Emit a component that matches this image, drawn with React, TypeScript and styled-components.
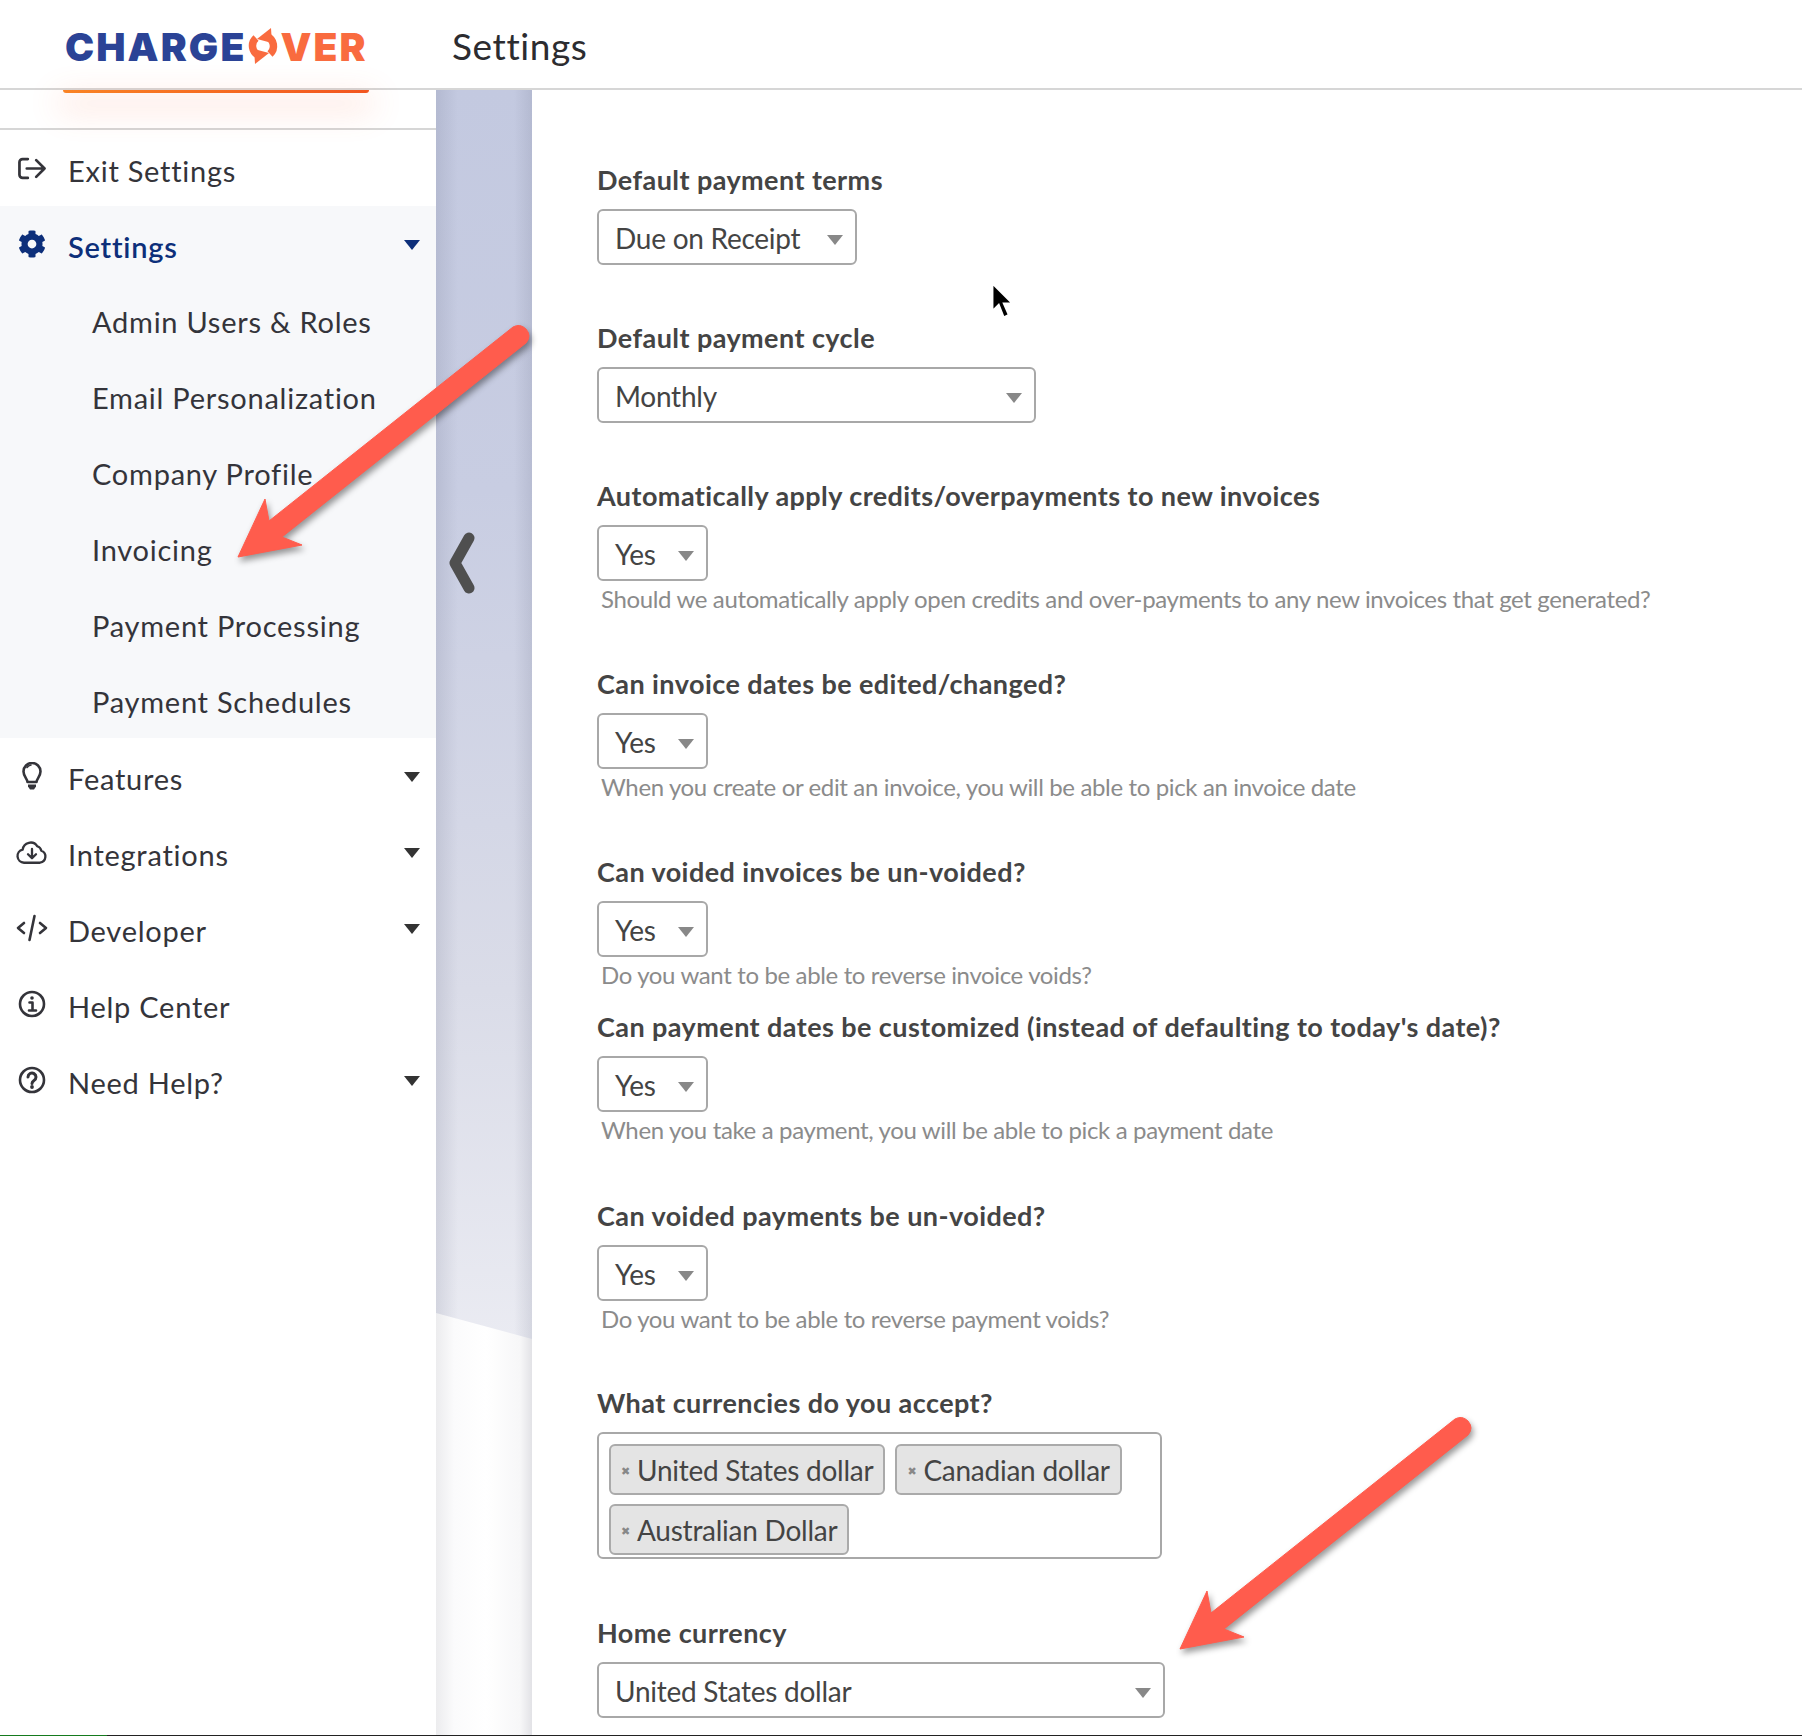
import styled, { createGlobalStyle } from 'styled-components'
import { FaCog } from 'react-icons/fa'

const UI_FONT = `Lato, "Open Sans", "Liberation Sans", sans-serif`

const GlobalStyle = createGlobalStyle`
  html, body {
    margin: 0;
    padding: 0;
    background: #fff;
  }
  * {
    box-sizing: border-box;
  }
`

const Page = styled.div`
  position: relative;
  width: 1802px;
  height: 1736px;
  display: flex;
  flex-direction: column;
  overflow: hidden;
  font-family: ${UI_FONT};
  color: #333;
`

const Header = styled.header`
  height: 90px;
  flex: none;
  display: flex;
  align-items: center;
  padding-top: 4px;
  border-bottom: 2px solid #d6d6d6;
  background: #fff;
`

const Logo = styled.div`
  width: 452px;
  padding-left: 65px;
  display: flex;
  align-items: center;
  font-family: Inter, sans-serif;
  font-weight: 900;
  font-size: 39px;
  line-height: 1;
`

const LogoBlue = styled.span`
  color: #2b4396;
  letter-spacing: 2.1px;
`

const LogoOrange = styled.span`
  color: #f96b3f;
  letter-spacing: 2.1px;
`

const PageTitle = styled.h1`
  margin: 0 0 2px;
  font-weight: 400;
  font-size: 37px;
  color: #2c2c30;
  letter-spacing: 0.6px;
`

const Main = styled.div`
  flex: 1;
  min-height: 0;
  display: flex;
`

const Sidebar = styled.nav`
  width: 436px;
  flex: none;
  background: #fff;
`

const SideTop = styled.div`
  height: 40px;
  border-bottom: 2px solid #d6d6d6;
`

const OrangeBar = styled.div`
  width: 306px;
  height: 3px;
  margin-left: 63px;
  border-radius: 0 0 4px 4px;
  background: linear-gradient(90deg, #f98324, #f2551f);
  box-shadow: 0 12px 32px 6px rgba(250, 110, 70, 0.2);
`

const MenuGroup = styled.div`
  background: #f7f8fa;
`

const Row = styled.div<{ $active?: boolean; $sub?: boolean }>`
  height: 76px;
  display: flex;
  align-items: center;
  padding: 0 16px ${({ $sub }) => ($sub ? '2px' : '0')} ${({ $sub }) => ($sub ? '92px' : '16px')};
  font-size: 29px;
  letter-spacing: 0.75px;
  color: ${({ $active }) => ($active ? '#0d2f7a' : '#34343a')};
  font-weight: ${({ $active }) => ($active ? 600 : 400)};
`

const RowIcon = styled.span`
  width: 32px;
  height: 34px;
  margin-right: 20px;
  flex: none;
  display: flex;
  align-items: center;
  justify-content: center;
`

const RowText = styled.span`
  flex: 1;
  padding-top: 4px;
`

const Caret = styled.span<{ $color?: string }>`
  width: 0;
  height: 0;
  flex: none;
  margin-top: 2px;
  border-left: 8.5px solid transparent;
  border-right: 8.5px solid transparent;
  border-top: 10px solid ${({ $color }) => $color ?? '#333'};
`

const SelectCaret = styled(Caret)`
  margin-top: 4px;
  border-left-width: 8px;
  border-right-width: 8px;
`

const Gutter = styled.div`
  position: relative;
  width: 96px;
  flex: none;
  padding: 442px 0 0 12px;
  background: linear-gradient(
    90deg,
    #ececee 0,
    #fbfbfc 18px,
    #ffffff 50px,
    #f7f7f8 84px,
    #e2e2e6 96px
  );

  &::before {
    content: '';
    position: absolute;
    inset: 0;
    clip-path: polygon(0 0, 100% 0, 100% 1249px, 0 1223px);
    background:
      linear-gradient(
        90deg,
        rgba(100, 105, 130, 0.16) 0,
        rgba(100, 105, 130, 0) 22px,
        rgba(100, 105, 130, 0) 78px,
        rgba(100, 105, 130, 0.16) 96px
      ),
      linear-gradient(180deg, #c3c9e0 0, #c8cde2 400px, #dadce8 900px, #eaebf2 1249px);
  }
`

const Chevron = styled.svg`
  position: relative;
  display: block;
`

const Card = styled.main`
  flex: 1;
  min-width: 0;
  padding: 73px 0 0 65px;
  background: #fff;
  border-top-left-radius: 8px;
`

const Group = styled.div<{ $after: number }>`
  margin-bottom: ${({ $after }) => $after}px;
`

const Label = styled.label`
  display: block;
  height: 34px;
  margin-bottom: 12px;
  font-size: 27px;
  line-height: 34px;
  font-weight: 700;
  color: #444;
  letter-spacing: 0.43px;
  white-space: nowrap;
`

const Select = styled.div<{ $width: number }>`
  width: ${({ $width }) => $width}px;
  height: 56px;
  display: flex;
  align-items: center;
  justify-content: space-between;
  padding: 2px 12px 0 16px;
  border: 2px solid #a8a8a8;
  border-radius: 6px;
  background: #fff;
  font-size: 28px;
  color: #444;
  letter-spacing: -0.25px;
`

const Help = styled.div`
  height: 30px;
  margin-top: 3px;
  padding-left: 4px;
  font-size: 24px;
  line-height: 30px;
  color: #8b8b8b;
  letter-spacing: -0.36px;
  white-space: nowrap;
`

const TagBox = styled.div`
  width: 565px;
  height: 127px;
  padding: 10px;
  display: flex;
  flex-wrap: wrap;
  align-content: flex-start;
  gap: 9px 10px;
  border: 2px solid #a8a8a8;
  border-radius: 6px;
`

const Tag = styled.span`
  height: 51px;
  display: flex;
  align-items: center;
  gap: 4px;
  padding: 1px 10px 0;
  background: #e4e4e4;
  border: 2px solid #aaa;
  border-radius: 6px;
  font-size: 28px;
  color: #444;
  letter-spacing: -0.25px;
`

const TagRemove = styled.span`
  width: 12px;
  margin-top: 3px;
  font-family: "DejaVu Sans", sans-serif;
  font-size: 11px;
  color: #888;
`

const BottomStrip = styled.div`
  height: 1px;
  flex: none;
  background: #222;
`

const BottomProgress = styled.div`
  width: 107px;
  height: 100%;
  background: #157a1e;
`

const Overlay = styled.svg<{ $left: number; $top: number }>`
  position: absolute;
  left: ${({ $left }) => $left}px;
  top: ${({ $top }) => $top}px;
  overflow: visible;
  z-index: 5;
`

const ArrowShape = styled.g`
  filter: drop-shadow(2px 4px 3px rgba(0, 0, 0, 0.4));
`

const IconStroke = styled.svg`
  fill: none;
  stroke: #34343a;
  stroke-width: 2.6;
  stroke-linecap: round;
  stroke-linejoin: round;
`

const MarkSvg = styled.svg`
  margin: 0 1px 0 1px;
`

function Arrow({ left, top }: { left: number; top: number }) {
  // tip is the origin of the drawing, the tail runs up and to the right
  return (
    <Overlay $left={left} $top={top} width="300" height="240" viewBox="0 -232 300 240">
      <ArrowShape>
        <path
          d="M0 0 L27 -58 L31 -36 L275 -230 Q282 -234 288 -228 Q294 -221 288 -214 L44 -20 L64 -12 Z"
          fill="#ff5c4d"
          stroke="#ff5c4d"
          strokeLinejoin="round"
          strokeWidth="1"
        />
      </ArrowShape>
    </Overlay>
  )
}

function LogoMark() {
  const half = (
    <>
      <path d="M20 8.500A10.500 10.500 0 0 1 23 26" fill="none" stroke="#f96b3f" strokeWidth="7.500" />
      <path d="M10 11 L24 0 L25 15 Z" fill="#f96b3f" />
    </>
  )
  return (
    <MarkSvg width="32" height="36" viewBox="0 0 32 36">
      {half}
      <g transform="rotate(180 16 18)">{half}</g>
    </MarkSvg>
  )
}

function ExitIcon() {
  return (
    <IconStroke width="30" height="23" viewBox="0 0 28 22">
      <path d="M10 2H5a3 3 0 0 0-3 3v12a3 3 0 0 0 3 3h5" />
      <path d="M9 11h17M18 3l8 8-8 8" />
    </IconStroke>
  )
}

function BulbIcon() {
  return (
    <IconStroke width="20" height="28" viewBox="0 0 20 28">
      <path d="M5.500 20c0-3-4-5.500-4-10.500a8.500 8.500 0 0 1 17 0c0 5-4 7.500-4 10.500z" />
      <path d="M5 5.500a6 6 0 0 1 4-2.500" strokeWidth="1.600" />
      <path d="M6 22.500h8v2l-2 3h-4l-2-3z" fill="#34343a" stroke="none" />
    </IconStroke>
  )
}

function CloudIcon() {
  return (
    <IconStroke width="38" height="27" viewBox="0 0 36 26">
      <path d="M9 24.500a7.500 7.500 0 0 1-1.500-14.800A9 9 0 0 1 24 6a7 7 0 0 1 4.500 5 7 7 0 0 1-1.500 13.500z" />
      <path d="M18 9v10M13.500 15l4.500 4.500 4.500-4.500" />
    </IconStroke>
  )
}

function CodeIcon() {
  return (
    <IconStroke width="32" height="28" viewBox="0 0 32 28">
      <path d="M8 9l-6 5 6 5M24 9l6 5-6 5M18.500 2l-5 24" />
    </IconStroke>
  )
}

function InfoIcon() {
  return (
    <IconStroke width="28" height="28" viewBox="0 0 28 28" strokeWidth="2.800">
      <circle cx="14" cy="14" r="12" />
      <path d="M11.500 12.500H14.500V20M11 20.500h7" />
      <circle cx="14" cy="8" r="1.800" fill="#34343a" stroke="none" />
    </IconStroke>
  )
}

function QuestionIcon() {
  return (
    <IconStroke width="28" height="28" viewBox="0 0 28 28">
      <circle cx="14" cy="14" r="12" />
      <path d="M10 11a4 4 0 1 1 6 3.500c-1.500 1-2 1.500-2 3" strokeWidth="3" />
      <circle cx="14" cy="21" r="1.900" fill="#34343a" stroke="none" />
    </IconStroke>
  )
}

const subItems = [
  'Admin Users & Roles',
  'Email Personalization',
  'Company Profile',
  'Invoicing',
  'Payment Processing',
  'Payment Schedules',
]

const lowerItems = [
  { label: 'Features', icon: <BulbIcon />, caret: true },
  { label: 'Integrations', icon: <CloudIcon />, caret: true },
  { label: 'Developer', icon: <CodeIcon />, caret: true },
  { label: 'Help Center', icon: <InfoIcon />, caret: false },
  { label: 'Need Help?', icon: <QuestionIcon />, caret: true },
]

const yesNoFields = [
  {
    label: 'Automatically apply credits/overpayments to new invoices',
    help: 'Should we automatically apply open credits and over-payments to any new invoices that get generated?',
    after: 53,
  },
  {
    label: 'Can invoice dates be edited/changed?',
    help: 'When you create or edit an invoice, you will be able to pick an invoice date',
    after: 53,
  },
  {
    label: 'Can voided invoices be un-voided?',
    help: 'Do you want to be able to reverse invoice voids?',
    after: 20,
  },
  {
    label: "Can payment dates be customized (instead of defaulting to today's date)?",
    help: 'When you take a payment, you will be able to pick a payment date',
    after: 54,
  },
  {
    label: 'Can voided payments be un-voided?',
    help: 'Do you want to be able to reverse payment voids?',
    after: 52,
  },
]

const currencies = ['United States dollar', 'Canadian dollar', 'Australian Dollar']

export default function App() {
  return (
    <Page>
      <GlobalStyle />
      <Header>
        <Logo>
          <LogoBlue>CHARGE</LogoBlue>
          <LogoMark />
          <LogoOrange>VER</LogoOrange>
        </Logo>
        <PageTitle>Settings</PageTitle>
      </Header>
      <Main>
        <Sidebar>
          <SideTop>
            <OrangeBar />
          </SideTop>
          <Row>
            <RowIcon>
              <ExitIcon />
            </RowIcon>
            <RowText>Exit Settings</RowText>
          </Row>
          <MenuGroup>
            <Row $active>
              <RowIcon>
                <FaCog size={28} color="#0d2f7a" />
              </RowIcon>
              <RowText>Settings</RowText>
              <Caret $color="#0d2f7a" />
            </Row>
            {subItems.map((item) => (
              <Row key={item} $sub>
                <RowText>{item}</RowText>
              </Row>
            ))}
          </MenuGroup>
          {lowerItems.map((item) => (
            <Row key={item.label}>
              <RowIcon>{item.icon}</RowIcon>
              <RowText>{item.label}</RowText>
              {item.caret && <Caret />}
            </Row>
          ))}
        </Sidebar>
        <Gutter>
          <Chevron width="28" height="62" viewBox="0 0 28 62">
            <path
              d="M21 6 L7 31 L21 56"
              fill="none"
              stroke="#4f4f4f"
              strokeWidth="11"
              strokeLinecap="round"
              strokeLinejoin="round"
            />
          </Chevron>
        </Gutter>
        <Card>
          <Group $after={56}>
            <Label>Default payment terms</Label>
            <Select $width={260}>
              Due on Receipt
              <SelectCaret $color="#888" />
            </Select>
          </Group>
          <Group $after={56}>
            <Label>Default payment cycle</Label>
            <Select $width={439}>
              Monthly
              <SelectCaret $color="#888" />
            </Select>
          </Group>
          {yesNoFields.map((field) => (
            <Group key={field.label} $after={field.after}>
              <Label>{field.label}</Label>
              <Select $width={111}>
                Yes
                <SelectCaret $color="#888" />
              </Select>
              <Help>{field.help}</Help>
            </Group>
          ))}
          <Group $after={57}>
            <Label>What currencies do you accept?</Label>
            <TagBox>
              {currencies.map((currency) => (
                <Tag key={currency}>
                  <TagRemove>✖</TagRemove>
                  {currency}
                </Tag>
              ))}
            </TagBox>
          </Group>
          <Group $after={0}>
            <Label>Home currency</Label>
            <Select $width={568}>
              United States dollar
              <SelectCaret $color="#888" />
            </Select>
          </Group>
        </Card>
      </Main>
      <BottomStrip>
        <BottomProgress />
      </BottomStrip>
      <Arrow left={238} top={325} />
      <Arrow left={1180} top={1417} />
      <Overlay $left={990} $top={281} width="25" height="40" viewBox="0 0 20 32">
        <path d="M2 2 L2 24 L7 19 L11 29 L15 27 L11 18 L18 18 Z" fill="#000" stroke="#fff" strokeWidth="1.500" />
      </Overlay>
    </Page>
  )
}
